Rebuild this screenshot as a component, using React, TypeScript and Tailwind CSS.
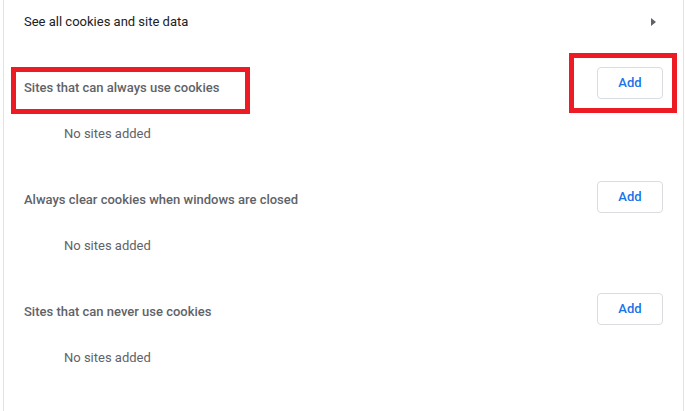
import React from 'react';

type Section = {
  title: string;
  buttonOffset: string;
  highlighted?: boolean;
};

const sections: Section[] = [
  { title: 'Sites that can always use cookies', buttonOffset: 'mt-[3px]', highlighted: true },
  { title: 'Always clear cookies when windows are closed', buttonOffset: 'mt-[5px]' },
  { title: 'Sites that can never use cookies', buttonOffset: 'mt-[5px]' },
];

const App: React.FC = () => {
  return (
    <div className="h-[411px] w-[685px] overflow-hidden bg-white font-['Roboto',sans-serif] text-[13px]">
      <div className="ml-[3px] mr-[1px] h-full border-x border-[#e3e3e3]">
        {/* link row */}
        <div className="flex h-[44px] items-center justify-between pl-[20px] pr-[27px]">
          <span className="text-[#202124]">See all cookies and site data</span>
          <span className="h-0 w-0 border-y-[4px] border-l-[5px] border-y-transparent border-l-[#5f6368]" />
        </div>

        {sections.map((s) => (
          <div key={s.title} className="pt-[20px] pb-[1px]">
            <div className="relative flex h-[48px] items-start justify-between pl-[20px] pr-[20px]">
              <span className="self-center font-medium text-[#5f6368]">{s.title}</span>
              <button
                className={`${s.buttonOffset} h-[32px] w-[66px] rounded-[4px] border border-[#dadce0] bg-white font-medium text-[#1a73e8]`}
              >
                Add
              </button>
              {s.highlighted && (
                <>
                  <div className="absolute left-[7px] top-[3px] h-[47px] w-[239px] border-[5px] border-[#ed1c24]" />
                  <div className="absolute right-[6px] top-[-11px] h-[60px] w-[108px] border-[5px] border-[#ed1c24]" />
                </>
              )}
            </div>
            <div className="flex h-[43px] items-center pl-[60px] pt-[1px] text-[#5f6368]">No sites added</div>
          </div>
        ))}
      </div>
    </div>
  );
};

export default App;
